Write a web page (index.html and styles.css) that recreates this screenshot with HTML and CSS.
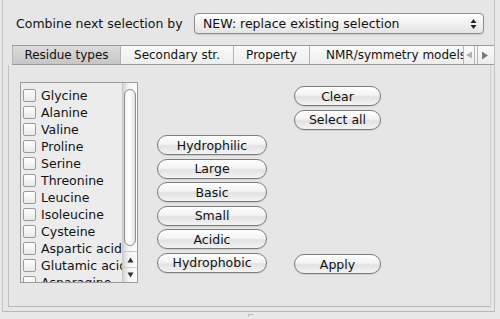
FILE: index.html
```html
<!DOCTYPE html>
<html>
<head>
  <meta charset="UTF-8">
  <title>Select residues</title>
  <link rel="stylesheet" href="styles.css">
</head>
<body>
  <div class="window">
    <div class="combine">
      <span class="combine-label">Combine next selection by</span>
      <div class="popup">
        <span class="popup-text">NEW: replace existing selection</span>
        <span class="popup-arrows">
          <svg width="7" height="12" viewBox="0 0 7 12"><path d="M3.5 1 L6.5 5 L0.5 5 Z M0.5 7 L6.5 7 L3.5 11 Z" fill="#222"/></svg>
        </span>
      </div>
    </div>

    <div class="tabs">
      <div class="tab tab-active">Residue types</div>
      <div class="tab">Secondary str.</div>
      <div class="tab">Property</div>
      <div class="tab tab-clip">NMR/symmetry models</div>
      <div class="tab-scroll tab-scroll-left">
        <svg width="8" height="8" viewBox="0 0 8 8"><path d="M1 4 L7 0.5 L7 7.5 Z" fill="#b0b0b0"/></svg>
      </div>
      <div class="tab-scroll">
        <svg width="8" height="9" viewBox="0 0 8 9"><path d="M7 4.5 L1 0.5 L1 8.5 Z" fill="#7a7a7a"/></svg>
      </div>
    </div>

    <div class="panel">
      <div class="listbox">
        <div class="list">
          <label class="item"><span class="check"></span>Glycine</label>
          <label class="item"><span class="check"></span>Alanine</label>
          <label class="item"><span class="check"></span>Valine</label>
          <label class="item"><span class="check"></span>Proline</label>
          <label class="item"><span class="check"></span>Serine</label>
          <label class="item"><span class="check"></span>Threonine</label>
          <label class="item"><span class="check"></span>Leucine</label>
          <label class="item"><span class="check"></span>Isoleucine</label>
          <label class="item"><span class="check"></span>Cysteine</label>
          <label class="item"><span class="check"></span>Aspartic acid</label>
          <label class="item"><span class="check"></span>Glutamic acid</label>
          <label class="item"><span class="check"></span>Asparagine</label>
        </div>
        <div class="scrollbar">
          <div class="thumb"></div>
          <div class="arrows">
            <div class="arrow">
              <svg width="7" height="6" viewBox="0 0 7 6"><path d="M3.5 0.5 L6.5 5.5 L0.5 5.5 Z" fill="#333"/></svg>
            </div>
            <div class="arrow">
              <svg width="7" height="6" viewBox="0 0 7 6"><path d="M0.5 0.5 L6.5 0.5 L3.5 5.5 Z" fill="#333"/></svg>
            </div>
          </div>
        </div>
      </div>

      <div class="groups">
        <button class="pill">Hydrophilic</button>
        <button class="pill">Large</button>
        <button class="pill">Basic</button>
        <button class="pill">Small</button>
        <button class="pill">Acidic</button>
        <button class="pill">Hydrophobic</button>
      </div>

      <div class="actions">
        <button class="pill pill-small">Clear</button>
        <button class="pill pill-small">Select all</button>
        <div class="spacer"></div>
        <button class="pill pill-small">Apply</button>
      </div>
    </div>
    <div class="grip">⌐</div>
  </div>
</body>
</html>
```

FILE: styles.css
```css
* {
  margin: 0;
  padding: 0;
  box-sizing: border-box;
}

body {
  font-family: "DejaVu Sans", "Liberation Sans", sans-serif;
  font-size: 12px;
  color: #111;
  background: #e8e8e8;
  width: 500px;
  height: 319px;
  overflow: hidden;
}

.window {
  margin-left: 2px;
  width: 493px;
  height: 312px;
  border-left: 1px solid #c4c4c4;
  border-right: 1px solid #c4c4c4;
  border-bottom: 1px solid #b8b8b8;
  background: #e6e6e6;
  position: relative;
}

/* combine row */
.combine {
  display: flex;
  align-items: center;
  height: 45px;
  padding: 2px 0 0 13px;
}

.combine-label {
  width: 178px;
  font-size: 12.5px;
}

.popup {
  display: flex;
  align-items: center;
  width: 290px;
  height: 21px;
  border: 1px solid #8e8e8e;
  border-radius: 4px;
  background: linear-gradient(#ffffff, #f1f1f1 50%, #e4e4e4);
  box-shadow: 0 1px 1px rgba(0, 0, 0, 0.12);
}

.popup-text {
  flex: 1;
  padding-left: 8px;
  font-size: 12.5px;
}

.popup-arrows {
  display: flex;
  align-items: center;
  justify-content: center;
  width: 20px;
  height: 100%;
}

/* tabs */
.tabs {
  display: flex;
  margin-left: 9px;
  height: 20px;
  border-top: 1px solid #9a9a9a;
  border-bottom: 1px solid #9a9a9a;
  background: linear-gradient(#fbfbfb, #ededed);
}

.tab {
  display: flex;
  align-items: center;
  justify-content: center;
  height: 100%;
  border-right: 1px solid #b4b4b4;
  font-size: 12px;
  white-space: nowrap;
}

.tab:nth-child(1) {
  width: 109px;
}

.tab:nth-child(2) {
  width: 113px;
}

.tab:nth-child(3) {
  width: 76px;
}

.tab-clip {
  width: 153px;
  justify-content: flex-start;
  padding-left: 16px;
  overflow: hidden;
  border-right: none;
}

.tab-active {
  background: linear-gradient(#dcdcdc, #c6c6c6);
  border-left: 1px solid #b4b4b4;
}

.tab-scroll {
  display: flex;
  align-items: center;
  justify-content: center;
  width: 15px;
  height: 100%;
  border-left: 1px solid #b4b4b4;
  background: linear-gradient(#fbfbfb, #ededed);
}

.tab-scroll-left {
  width: 12px;
  border-right: 1px solid #b4b4b4;
  margin-right: 2px;
}

/* panel */
.panel {
  display: flex;
  margin: 0 3px 0 5px;
  height: 242px;
  border-left: 1px solid #c0c0c0;
  border-right: 1px solid #d0d0d0;
  border-bottom: 1px solid #b8b8b8;
  padding: 17px 0 0 11px;
}

.listbox {
  display: flex;
  width: 118px;
  height: 201px;
  border: 1px solid #9c9c9c;
  background: #ececec;
}

.list {
  flex: 1;
  overflow: hidden;
  padding-top: 4px;
}

.item {
  display: flex;
  align-items: center;
  height: 17px;
  padding-left: 2px;
  font-size: 12.5px;
  white-space: nowrap;
}

.check {
  width: 13px;
  height: 13px;
  margin-right: 5px;
  border: 1px solid #9a9a9a;
  border-radius: 2px;
  background: linear-gradient(#ffffff, #e9e9e9);
  flex-shrink: 0;
}

.scrollbar {
  display: flex;
  flex-direction: column;
  width: 15px;
  border-left: 1px solid #c8c8c8;
  background: linear-gradient(90deg, #d4d4d4, #f4f4f4 40%, #fbfbfb);
}

.thumb {
  margin: 6px 1px 0 1px;
  height: 157px;
  border: 1px solid #8c8c8c;
  border-radius: 7px;
  background: linear-gradient(90deg, #f2f2f2, #ffffff 45%, #e2e2e2);
}

.arrows {
  margin-top: auto;
  border-top: 1px solid #c8c8c8;
}

.arrow {
  display: flex;
  align-items: center;
  justify-content: center;
  height: 15px;
}

.arrow + .arrow {
  border-top: 1px solid #d2d2d2;
}

/* buttons */
.groups {
  display: flex;
  flex-direction: column;
  gap: 3.6px;
  margin: 53px 0 0 19px;
}

.pill {
  width: 110px;
  height: 20px;
  border: 1px solid #7c7c7c;
  border-radius: 10px;
  background: linear-gradient(#ffffff, #f3f3f3 45%, #e2e2e2 55%, #f4f4f4);
  font-family: inherit;
  font-size: 12.5px;
  color: #111;
  box-shadow: 0 1px 1px rgba(0, 0, 0, 0.1);
}

.actions {
  display: flex;
  flex-direction: column;
  gap: 3.6px;
  margin: 4px 0 0 27px;
  height: 188px;
}

.pill-small {
  width: 87px;
}

.spacer {
  flex: 1;
}

.grip {
  position: absolute;
  left: 244px;
  bottom: -9px;
  font-size: 8px;
  color: #999;
}
```
